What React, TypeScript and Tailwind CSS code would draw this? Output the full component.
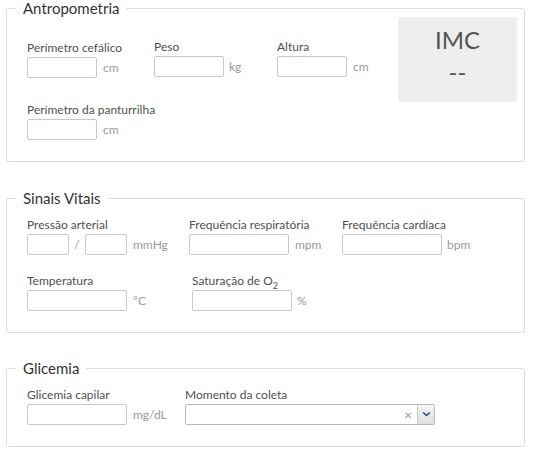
import React from "react";

const Label = ({ children }: { children: React.ReactNode }) => (
  <div className="text-[12px] leading-[15px] text-[#505050] whitespace-nowrap">{children}</div>
);

const Unit = ({ children, ml = "ml-[6px]" }: { children: React.ReactNode; ml?: string }) => (
  <span className={`${ml} text-[12px] leading-[15px] text-[#999] whitespace-nowrap`}>{children}</span>
);

const Input = ({ w }: { w: string }) => (
  <div className={`${w} h-[21px] border border-[#c8c8c8] rounded-[2px] bg-white shrink-0`} />
);

export default function App() {
  return (
    <div className="w-[533px] h-[453px] bg-white font-['Lato',sans-serif] overflow-hidden">
      {/* Antropometria */}
      <fieldset className="ml-[6px] w-[519px] border border-[#dcdcdc] rounded-[3px] pl-[20px] pr-[7px] pb-[21px]">
        <legend className="ml-[-11px] px-[7px] text-[15px] leading-[17px] text-[#333]">Antropometria</legend>
        <div className="flex">
          <div className="flex-1 pt-[23px]">
            <div className="flex">
              <div className="w-[127px]">
                <Label>Perímetro cefálico</Label>
                <div className="mt-[2px] flex items-center">
                  <Input w="w-[70px]" />
                  <Unit>cm</Unit>
                </div>
              </div>
              <div className="w-[123px] -mt-[1px]">
                <Label>Peso</Label>
                <div className="mt-[2px] flex items-center">
                  <Input w="w-[70px]" />
                  <Unit ml="ml-[5px]">kg</Unit>
                </div>
              </div>
              <div className="-mt-[1px]">
                <Label>Altura</Label>
                <div className="mt-[2px] flex items-center">
                  <Input w="w-[70px]" />
                  <Unit>cm</Unit>
                </div>
              </div>
            </div>
            <div className="mt-[24px]">
              <Label>Perímetro da panturrilha</Label>
              <div className="mt-[2px] flex items-center">
                <Input w="w-[70px]" />
                <Unit>cm</Unit>
              </div>
            </div>
          </div>
          <div className="w-[119px] h-[85px] bg-[#eeeeee] rounded-[3px] self-start flex flex-col items-center pt-[8px] text-[#555]">
            <div className="text-[24px] leading-[29px]">IMC</div>
            <div className="text-[24px] leading-[29px] mt-[3px]">--</div>
          </div>
        </div>
      </fieldset>

      {/* Sinais Vitais */}
      <fieldset className="mt-[28px] ml-[6px] w-[519px] border border-[#dcdcdc] rounded-[3px] pl-[20px] pr-[7px] pt-[10px] pb-[21px]">
        <legend className="ml-[-11px] px-[7px] text-[15px] leading-[17px] text-[#333]">Sinais Vitais</legend>
        <div className="flex">
          <div className="w-[162px]">
            <Label>Pressão arterial</Label>
            <div className="mt-[2px] flex items-center">
              <Input w="w-[42px]" />
              <span className="w-[16px] text-center text-[12px] text-[#999]">/</span>
              <Input w="w-[42px]" />
              <Unit>mmHg</Unit>
            </div>
          </div>
          <div className="w-[153px]">
            <Label>Frequência respiratória</Label>
            <div className="mt-[2px] flex items-center">
              <Input w="w-[100px]" />
              <Unit>mpm</Unit>
            </div>
          </div>
          <div>
            <Label>Frequência cardíaca</Label>
            <div className="mt-[2px] flex items-center">
              <Input w="w-[100px]" />
              <Unit ml="ml-[5px]">bpm</Unit>
            </div>
          </div>
        </div>
        <div className="flex mt-[18px]">
          <div className="w-[165px]">
            <Label>Temperatura</Label>
            <div className="mt-[2px] flex items-center">
              <Input w="w-[100px]" />
              <Unit>°C</Unit>
            </div>
          </div>
          <div>
            <Label>
              Saturação de O<sub className="text-[9px] leading-none align-[-2px]">2</sub>
            </Label>
            <div className="mt-[2px] flex items-center">
              <Input w="w-[100px]" />
              <Unit ml="ml-[5px]">%</Unit>
            </div>
          </div>
        </div>
      </fieldset>

      {/* Glicemia */}
      <fieldset className="mt-[27px] ml-[6px] w-[519px] border border-[#dcdcdc] rounded-[3px] pl-[20px] pr-[7px] pt-[10px] pb-[21px]">
        <legend className="ml-[-11px] px-[7px] text-[15px] leading-[17px] text-[#333]">Glicemia</legend>
        <div className="flex">
          <div className="w-[158px]">
            <Label>Glicemia capilar</Label>
            <div className="mt-[2px] flex items-center">
              <Input w="w-[100px]" />
              <Unit>mg/dL</Unit>
            </div>
          </div>
          <div>
            <Label>Momento da coleta</Label>
            <div className="mt-[2px] w-[250px] h-[21px] border border-[#b9b9b9] rounded-[2px] bg-white flex items-stretch">
              <div className="flex-1" />
              <div className="flex items-center pr-[5px] text-[#999] text-[14px] leading-none">×</div>
              <div className="w-[17px] border-l border-[#c8c8c8] bg-gradient-to-b from-[#f6f6f6] to-[#dedede] flex items-center justify-center">
                <svg width="9" height="6" viewBox="0 0 9 6">
                  <path d="M0.5 0.8 L4.5 4.6 L8.5 0.8 L7.3 0 L4.5 2.6 L1.7 0 Z" fill="#23478f" />
                </svg>
              </div>
            </div>
          </div>
        </div>
      </fieldset>
    </div>
  );
}
